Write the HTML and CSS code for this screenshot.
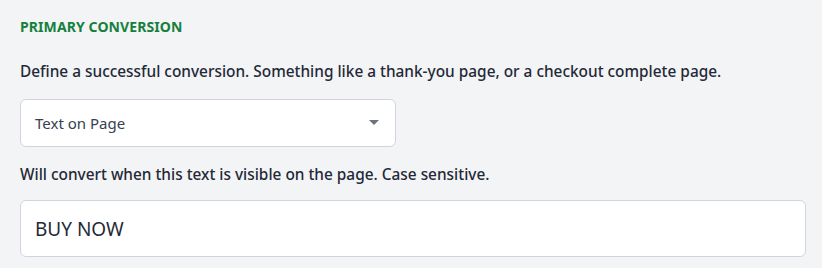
FILE: index.html
```html
<!DOCTYPE html>
<html lang="en">
<head>
  <meta charset="UTF-8">
  <meta name="viewport" content="width=device-width, initial-scale=1.0">
  <title>Primary Conversion</title>
  <link rel="stylesheet" href="styles.css">
</head>
<body>
  <section class="conversion">
    <h2 class="section-title">PRIMARY CONVERSION</h2>

    <p class="field-help">Define a successful conversion. Something like a thank-you page, or a checkout complete page.</p>

    <!-- Conversion type -->
    <div class="select-box">
      <span class="select-value">Text on Page</span>
      <span class="caret"></span>
    </div>

    <p class="field-help field-help-alt">Will convert when this text is visible on the page. Case sensitive.</p>

    <!-- Text to match -->
    <div class="text-input">BUY NOW</div>
  </section>
</body>
</html>
```

FILE: styles.css
```css
/* General Reset */
* {
  margin: 0;
  padding: 0;
  box-sizing: border-box;
}

body {
  font-family: "Noto Sans", "Open Sans", sans-serif;
  background-color: #f3f4f6;
  color: #1f2937;
  width: 822px;
  height: 268px;
  overflow: hidden;
}

.conversion {
  padding: 18px 16px 0 20px;
}

/* Heading */
.section-title {
  color: #15803d;
  font-size: 14px;
  font-weight: 700;
  line-height: 18px;
  letter-spacing: 0.1px;
}

/* Help text */
.field-help {
  font-size: 15.4px;
  font-weight: 500;
  line-height: 22px;
  margin-top: 25px;
  color: #1f2937;
}

.field-help-alt {
  margin-top: 17px;
}

/* Select */
.select-box {
  width: 376px;
  height: 48px;
  margin-top: 16px;
  background-color: #fff;
  border: 1px solid #d1d5db;
  border-radius: 6px;
  display: flex;
  align-items: center;
  justify-content: space-between;
  padding: 0 16px 0 14px;
}

.select-value {
  font-size: 15px;
  color: #374151;
}

.caret {
  width: 0;
  height: 0;
  border-left: 5px solid transparent;
  border-right: 5px solid transparent;
  border-top: 5px solid #6b7280;
  margin-top: -2px;
}

/* Text input */
.text-input {
  height: 57px;
  margin-top: 14px;
  background-color: #fff;
  border: 1px solid #d1d5db;
  border-radius: 6px;
  display: flex;
  align-items: center;
  padding: 0 14px;
  font-size: 19px;
  color: #1f2937;
}
```
